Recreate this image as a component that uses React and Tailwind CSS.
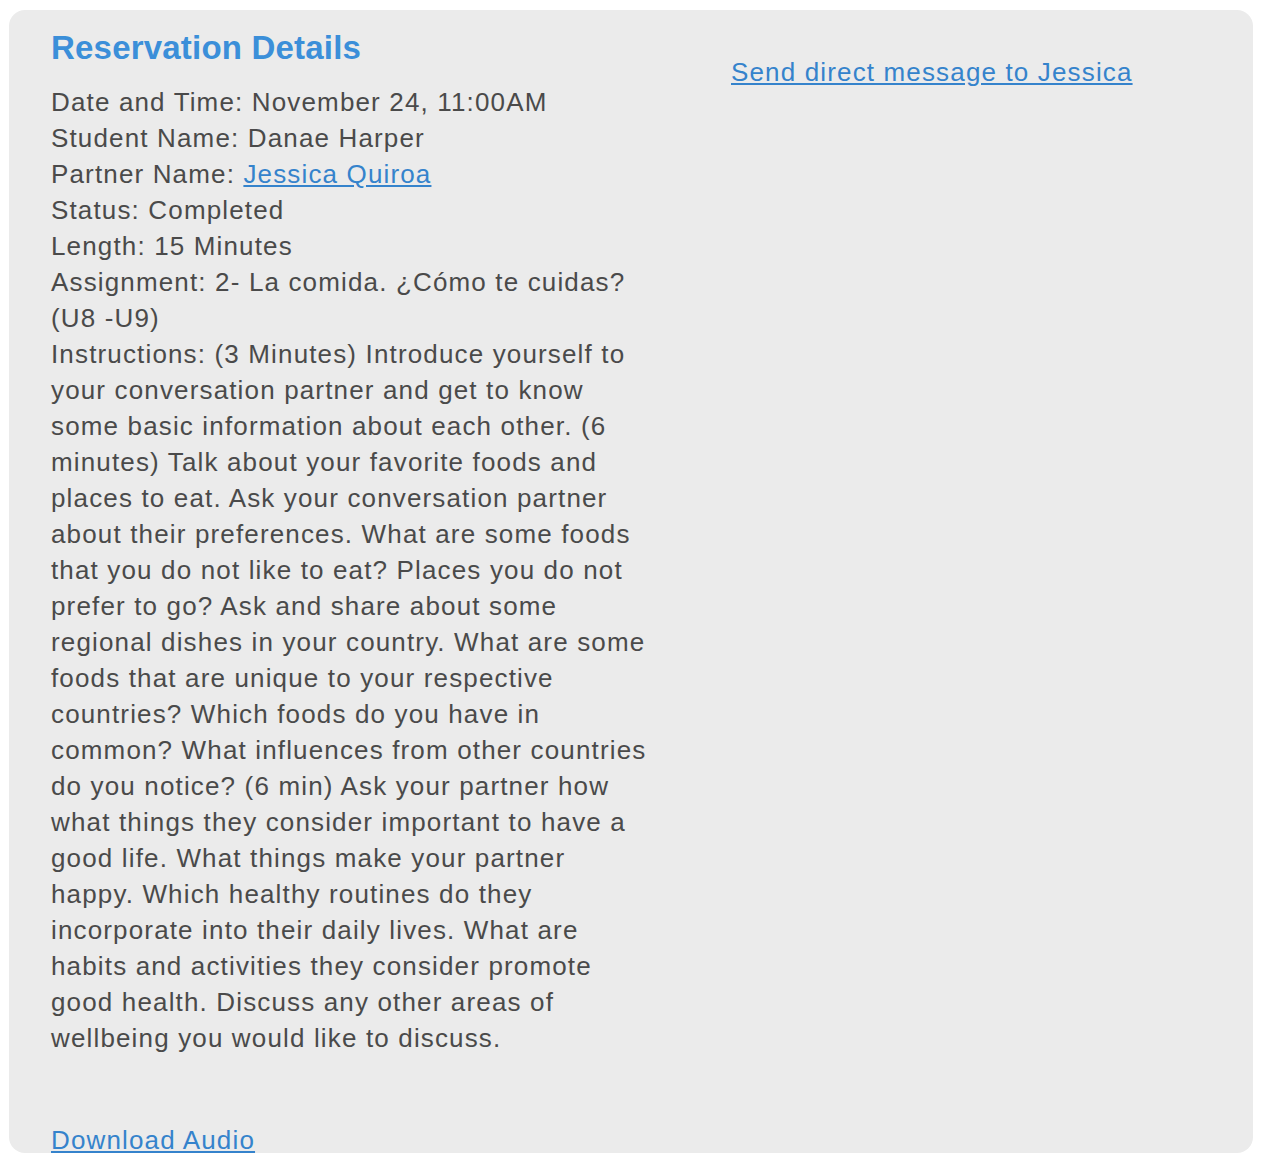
import React from 'react';

const instructions =
  'Instructions: (3 Minutes) Introduce yourself to your conversation partner and get to know some basic information about each other. (6 minutes) Talk about your favorite foods and places to eat. Ask your conversation partner about their preferences. What are some foods that you do not like to eat? Places you do not prefer to go? Ask and share about some regional dishes in your country. What are some foods that are unique to your respective countries? Which foods do you have in common? What influences from other countries do you notice? (6 min) Ask your partner how what things they consider important to have a good life. What things make your partner happy. Which healthy routines do they incorporate into their daily lives. What are habits and activities they consider promote good health. Discuss any other areas of wellbeing you would like to discuss.';

const App = () => {
  return (
    <div className="min-h-[1168px] bg-white font-['Liberation_Sans',Arial,sans-serif]">
      <div className="pt-[10px] pl-[9px] pr-[15px]">
        {/* Reservation card */}
        <div className="flex rounded-[16px] bg-[#ebebeb] pl-[42px] pt-5">
          <div className="w-[598px] shrink-0">
            <h2 className="text-[33px] leading-[36px] font-bold tracking-[0.2px] text-[#3b8fd9] mb-[18px]">
              Reservation Details
            </h2>
            <div className="text-[26px] leading-[36px] tracking-[1.15px] text-[#4a4a4a]">
              <p>Date and Time: November 24, 11:00AM</p>
              <p>Student Name: Danae Harper</p>
              <p>
                Partner Name:{' '}
                <a href="#" className="text-[#3583cc] underline">
                  Jessica Quiroa
                </a>
              </p>
              <p>Status: Completed</p>
              <p>Length: 15 Minutes</p>
              <p>Assignment: 2- La comida. ¿Cómo te cuidas? (U8 -U9)</p>
              <p>{instructions}</p>
            </div>
            <div className="mt-[71px] text-[26px] leading-[26px] tracking-[1.15px]">
              <a href="#" className="text-[#3583cc] underline">
                Download Audio
              </a>
            </div>
          </div>
          <div className="ml-[82px] pt-[24px] text-[26px] leading-[36px] tracking-[1.15px]">
            <a href="#" className="text-[#3583cc] underline">
              Send direct message to Jessica
            </a>
          </div>
        </div>
      </div>
    </div>
  );
};

export default App;
